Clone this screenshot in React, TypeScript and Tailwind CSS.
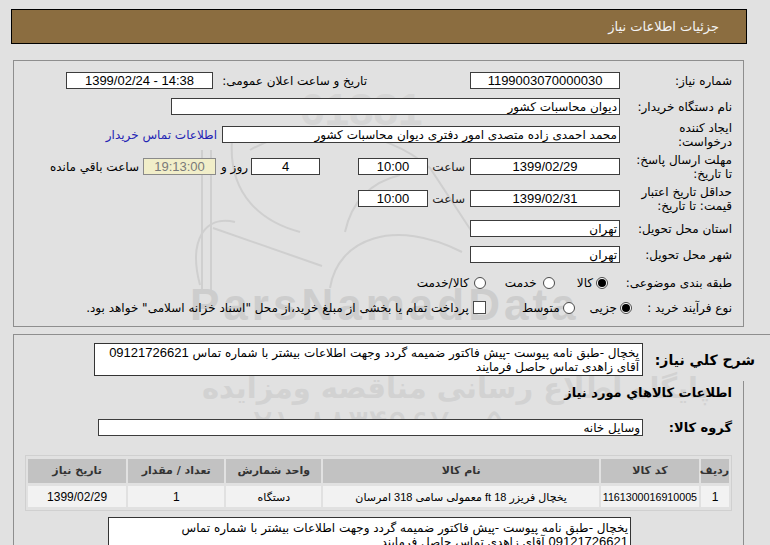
import React from "react";

function Box({
  cls,
  children,
  center,
}: {
  cls: string;
  children?: React.ReactNode;
  center?: boolean;
}) {
  return (
    <div
      className={`${cls} h-[17px] shrink-0 border border-[#3c3c3c] bg-white flex items-center ${
        center ? "justify-center" : "justify-start pr-[2px]"
      } leading-none whitespace-nowrap overflow-hidden`}
    >
      {children}
    </div>
  );
}

function Num({ children }: { children: React.ReactNode }) {
  return (
    <span dir="ltr" className="text-[13px] font-[family-name:'Liberation_Sans',sans-serif]">
      {children}
    </span>
  );
}

function Radio({ on }: { on?: boolean }) {
  return (
    <span className="w-[12px] h-[12px] shrink-0 rounded-full border border-[#4a4a4a] bg-white flex items-center justify-center">
      {on && <span className="w-[8px] h-[8px] rounded-full bg-black" />}
    </span>
  );
}

function Watermark() {
  return (
    <div className="absolute inset-0 z-0 pointer-events-none select-none">
      <svg
        className="absolute left-0 top-0"
        width="770"
        height="545"
        viewBox="0 0 770 545"
        fill="none"
        stroke="#cfcfcf"
        strokeWidth="2"
      >
        <path d="M202 150 L202 290 M211 150 L211 290" />
        <path d="M200 285 C188 240 205 215 235 222" />
        <path d="M213 228 L322 266" />
        <path d="M232 140 C228 195 262 222 300 232" />
        <path d="M330 288 C338 238 395 218 462 252" />
        <path d="M250 150 C305 118 385 128 430 168 L472 232" />
        <path d="M345 232 C352 200 372 182 400 175" />
      </svg>
      <div className="absolute left-[300px] top-[88px] text-[44px] font-bold leading-none text-[#d6d6d6] font-[family-name:'Liberation_Sans',sans-serif]">
        61881
      </div>
      <div className="absolute left-[190px] top-[283px] text-[44px] tracking-[4px] font-bold leading-none text-[#cdcdcd] font-[family-name:'Liberation_Sans',sans-serif] whitespace-nowrap">
        ParsNamadData
      </div>
      <div
        dir="rtl"
        className="absolute left-[202px] top-[374px] text-[29px] font-bold leading-none text-[#d2d2d2] whitespace-nowrap"
      >
        پایگاه اطلاع رسانی مناقصه ومزایده
      </div>
      <div
        dir="ltr"
        className="absolute left-[232px] top-[404px] text-[38px] leading-none text-[#d2d2d2] whitespace-nowrap"
      >
        ۰۲۱-۸۸۳۴۹۶۷۰-۵
      </div>
    </div>
  );
}

export default function App() {
  return (
    <div className="relative w-[770px] h-[545px] overflow-hidden bg-[#e1e1e1] text-[12px] leading-[14px] text-black font-[family-name:Tahoma,'DejaVu_Sans',sans-serif]">
      <Watermark />
      <div className="relative z-10">
        {/* Header */}
        <div
          dir="rtl"
          className="ml-[11px] mt-[9px] w-[736px] h-[35px] border border-black bg-[#8b6d40] flex items-center pr-[27px] text-[13px] text-[#f4f4f4]"
        >
          جزئیات اطلاعات نیاز
        </div>

        {/* Panel 1 */}
        <div
          dir="rtl"
          className="ml-[13px] mt-[16px] w-[731px] h-[267px] border border-[#8e8e8e] pt-[11px] pr-[11px]"
        >
          {/* row 1 */}
          <div className="flex items-center h-[17px]">
            <div className="w-[112px] shrink-0">شماره نیاز:</div>
            <Box cls="w-[150px]" center>
              <Num>1199003070000030</Num>
            </Box>
            <div className="w-[154px] mr-[103px] shrink-0 whitespace-nowrap">
              تاریخ و ساعت اعلان عمومی:
            </div>
            <Box cls="w-[147px]" center>
              <Num>1399/02/24 - 14:38</Num>
            </Box>
          </div>

          {/* row 2 */}
          <div className="flex items-center h-[17px] mt-[9px]">
            <div className="w-[112px] shrink-0">نام دستگاه خریدار:</div>
            <Box cls="w-[449px]">دیوان محاسبات کشور</Box>
          </div>

          {/* row 3 */}
          <div className="flex items-center h-[17px] mt-[11px]">
            <div className="w-[112px] shrink-0">
              ایجاد کننده
              <br />
              درخواست:
            </div>
            <Box cls="w-[398px]">محمد احمدی زاده متصدی امور دفتری دیوان محاسبات کشور</Box>
            <div className="mr-[5px] text-[#2424b4] whitespace-nowrap">اطلاعات تماس خریدار</div>
          </div>

          {/* row 4 */}
          <div className="flex items-center h-[17px] mt-[15px]">
            <div className="w-[112px] shrink-0">
              مهلت ارسال پاسخ:
              <br />
              تا تاریخ:
            </div>
            <Box cls="w-[150px]" center>
              <Num>1399/02/29</Num>
            </Box>
            <div className="w-[42px] shrink-0 pr-[5px] text-[#222]">ساعت</div>
            <Box cls="w-[70px]" center>
              <Num>10:00</Num>
            </Box>
            <Box cls="w-[69px] mr-[38px]" center>
              <Num>4</Num>
            </Box>
            <div className="w-[35px] shrink-0 pr-[3px] whitespace-nowrap">روز و</div>
            <div className="w-[73px] h-[17px] shrink-0 border border-[#8a8a8a] bg-[#f1eec9] flex items-center justify-center leading-none text-[#7a7a7a]">
              <Num>19:13:00</Num>
            </div>
            <div className="pr-[4px] whitespace-nowrap">ساعت باقي مانده</div>
          </div>

          {/* row 5 */}
          <div className="flex items-center h-[17px] mt-[15px]">
            <div className="w-[112px] shrink-0">
              حداقل تاریخ اعتبار
              <br />
              قیمت: تا تاریخ:
            </div>
            <Box cls="w-[150px]" center>
              <Num>1399/02/31</Num>
            </Box>
            <div className="w-[42px] shrink-0 pr-[5px] text-[#222]">ساعت</div>
            <Box cls="w-[70px]" center>
              <Num>10:00</Num>
            </Box>
          </div>

          {/* row 6 */}
          <div className="flex items-center h-[17px] mt-[13px]">
            <div className="w-[112px] shrink-0">استان محل تحویل:</div>
            <Box cls="w-[150px]">تهران</Box>
          </div>

          {/* row 7 */}
          <div className="flex items-center h-[17px] mt-[9px]">
            <div className="w-[112px] shrink-0">شهر محل تحویل:</div>
            <Box cls="w-[150px]">تهران</Box>
          </div>

          {/* row 8 */}
          <div className="flex items-center h-[17px] mt-[11px]">
            <div className="w-[124px] shrink-0 whitespace-nowrap">طبقه بندی موضوعی:</div>
            <Radio on />
            <span className="mr-[3px]">کالا</span>
            <span className="mr-[22px] flex">
              <Radio />
            </span>
            <span className="mr-[6px]">خدمت</span>
            <span className="mr-[19px] flex">
              <Radio />
            </span>
            <span className="mr-[5px]">کالا/خدمت</span>
          </div>

          {/* row 9 */}
          <div className="flex items-center h-[17px] mt-[8px]">
            <div className="w-[100px] shrink-0 whitespace-nowrap">نوع فرآیند خرید :</div>
            <Radio on />
            <span className="mr-[3px]">جزیی</span>
            <span className="mr-[15px] flex">
              <Radio />
            </span>
            <span className="mr-[3px]">متوسط</span>
            <span className="mr-[36px] w-[13px] h-[13px] shrink-0 border border-[#4a4a4a] bg-white" />
            <span className="mr-[4px] whitespace-nowrap">
              پرداخت تمام یا بخشی از مبلغ خرید،از محل "اسناد خزانه اسلامی" خواهد بود.
            </span>
          </div>
        </div>

        {/* Panel 2 */}
        <div
          dir="rtl"
          className="ml-[13px] mt-[7px] w-[757px] h-[220px] border-l border-t border-[#8e8e8e] pt-[8px]"
        >
          <div className="flex items-center pr-[15px]">
            <div className="w-[112px] shrink-0 text-[14px] font-bold whitespace-nowrap">
              شرح کلي نياز:
            </div>
            <div className="w-[549px] h-[33px] shrink-0 border border-[#333] bg-white pr-[3px] pt-[2px] leading-[14px] whitespace-nowrap overflow-hidden">
              یخچال -طبق نامه پیوست -پیش فاکتور ضمیمه گردد وجهت اطلاعات بیشتر با شماره تماس{" "}
              <span className="text-[13px] font-[family-name:'Liberation_Sans',sans-serif]">09121726621</span>
              <br />
              آقای زاهدی تماس حاصل فرمایند
            </div>
          </div>

          <div className="w-[730px] mr-[26px] mt-[5px] border-r border-[#8e8e8e] pr-[11px] h-[170px]">
            <div className="h-[24px] flex items-center text-[13px] font-bold whitespace-nowrap">
              اطلاعات كالاهاي مورد نياز
            </div>

            <div className="flex items-center h-[17px] mt-[14px]">
              <div className="w-[89px] shrink-0 text-[13px] font-bold whitespace-nowrap">گروه کالا:</div>
              <Box cls="w-[545px]">وسایل خانه</Box>
            </div>

            <div className="mt-[19px] w-[707px] border border-[#d0d0d0]">
              <table className="w-full table-fixed border-separate border-spacing-x-[2px] border-spacing-y-[3px] text-center text-[11px]">
                <colgroup>
                  <col className="w-[28px]" />
                  <col className="w-[98px]" />
                  <col className="w-[275px]" />
                  <col className="w-[95px]" />
                  <col className="w-[96px]" />
                  <col className="w-[98px]" />
                </colgroup>
                <thead>
                  <tr className="h-[24px] text-[#333]">
                    <th className="bg-[#c2c2c2] font-bold">ردیف</th>
                    <th className="bg-[#c2c2c2] font-bold">کد کالا</th>
                    <th className="bg-[#c2c2c2] font-bold">نام کالا</th>
                    <th className="bg-[#c2c2c2] font-bold">واحد شمارش</th>
                    <th className="bg-[#c2c2c2] font-bold">تعداد / مقدار</th>
                    <th className="bg-[#c2c2c2] font-bold">تاریخ نیاز</th>
                  </tr>
                </thead>
                <tbody className="font-[family-name:'Liberation_Sans','DejaVu_Sans',sans-serif]">
                  <tr className="h-[21px]">
                    <td className="bg-[#f2f2f2] text-[12px]">1</td>
                    <td className="bg-[#f2f2f2] text-[10.7px] whitespace-nowrap overflow-hidden">1161300016910005</td>
                    <td className="bg-[#f2f2f2] whitespace-nowrap overflow-hidden">یخچال فریزر 18 ft معمولی سامی 318 امرسان</td>
                    <td className="bg-[#f2f2f2]">دستگاه</td>
                    <td className="bg-[#f2f2f2] text-[12px]">1</td>
                    <td className="bg-[#f2f2f2] text-[12px]">
                      <span dir="ltr">1399/02/29</span>
                    </td>
                  </tr>
                </tbody>
              </table>
            </div>

            <div className="mt-[6px] mr-[101px] w-[523px] h-[40px] border border-[#333] bg-white pr-[2px] pt-[3px] leading-[14px] whitespace-nowrap overflow-hidden">
              یخچال -طبق نامه پیوست -پیش فاکتور ضمیمه گردد وجهت اطلاعات بیشتر با شماره تماس
              <br />
              <span className="text-[13px] font-[family-name:'Liberation_Sans',sans-serif]">09121726621</span>{" "}
              آقای زاهدی تماس حاصل فرمایند
            </div>
          </div>
        </div>
      </div>
    </div>
  );
}
